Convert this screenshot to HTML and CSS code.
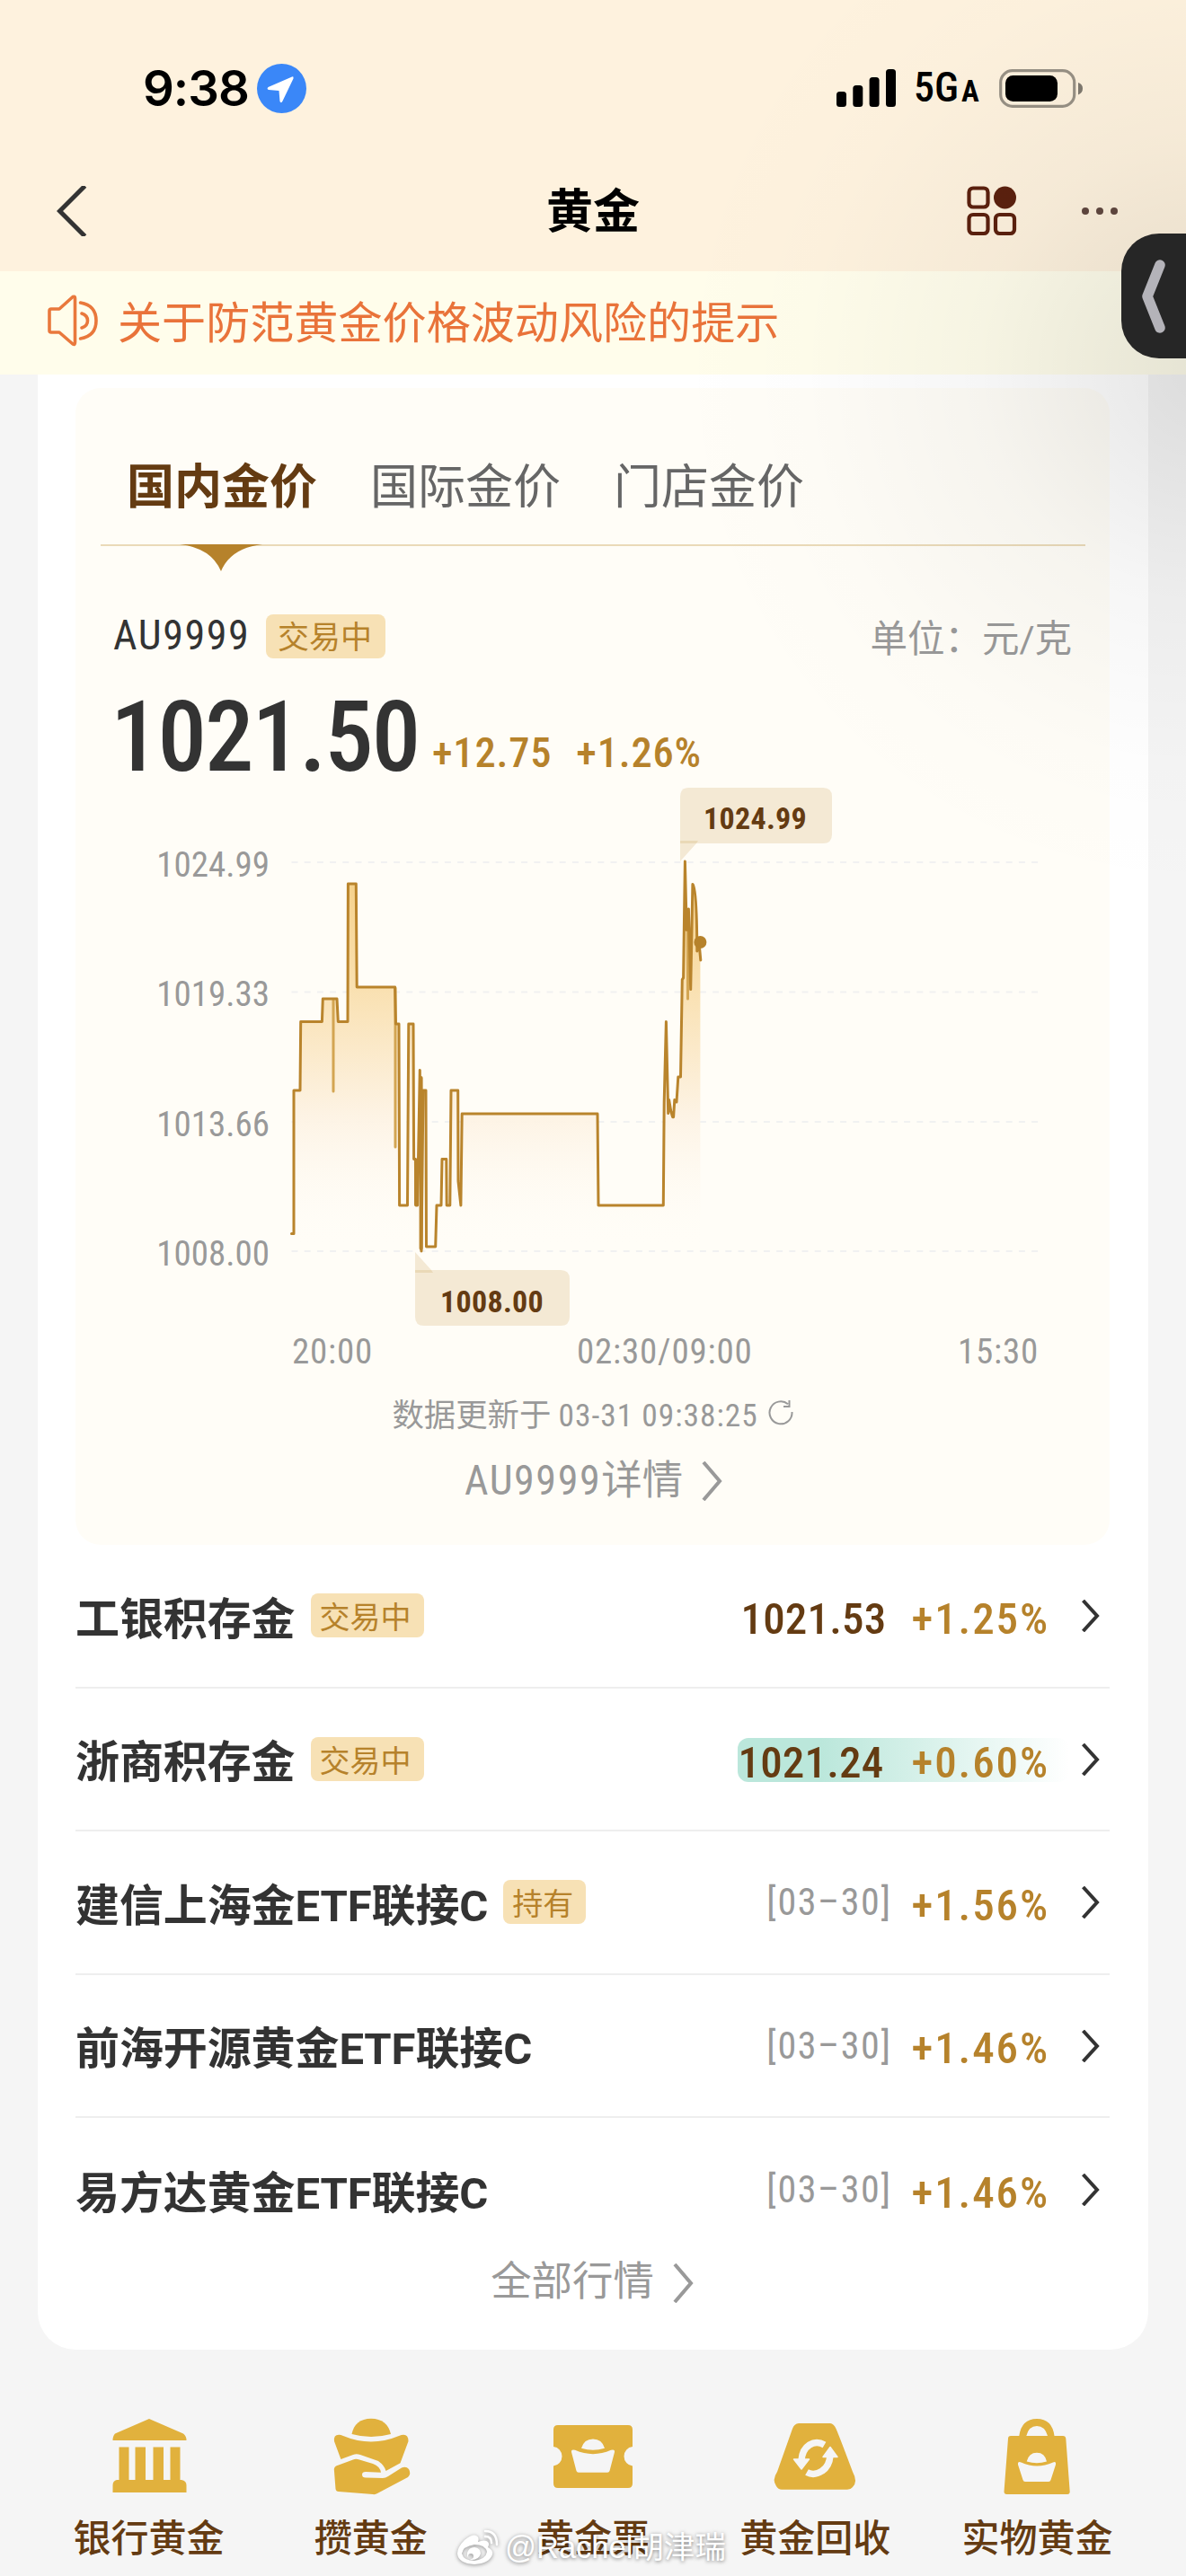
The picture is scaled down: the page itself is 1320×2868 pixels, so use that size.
FILE: index.html
```html
<!DOCTYPE html>
<html lang="zh-CN">
<head>
  <meta charset="UTF-8" />
  <meta name="viewport" content="width=device-width, initial-scale=1.0"/>
  <title>黄金</title>
  <link rel="stylesheet" href="styles.css">
</head>
<body>
  <div class="page">
    <header class="header">
      <div class="status-bar">
        <div class="status-left">
          <span class="time">9:38</span>
          <svg class="location" viewBox="0 0 55 55">
            <circle cx="27.5" cy="27.5" r="27.5" fill="#3a87f8"/>
            <path d="M39 14.5 L12.5 26 Q10.5 28 13 29 L24.5 30 L25.5 42 Q27 44.500 28.500 41.500 L40.500 16.500 Q41 13.500 39 14.500Z" fill="#fff"/>
          </svg>
        </div>
        <div class="status-right">
          <svg class="signal" viewBox="0 0 66 42">
            <rect x="0" y="25" width="11" height="17" rx="3.500"/>
            <rect x="18.300" y="18" width="11" height="24" rx="3.500"/>
            <rect x="36.600" y="9" width="11" height="33" rx="3.500"/>
            <rect x="55" y="0" width="11" height="42" rx="3.500"/>
          </svg>
          <span class="network">5G<small>A</small></span>
          <svg class="battery" viewBox="0 0 93 43">
            <rect x="1.700" y="1.700" width="82" height="39.600" rx="13" fill="none" stroke="#000" stroke-opacity=".4" stroke-width="3.200"/>
            <rect x="7" y="7" width="58" height="29" rx="8.500"/>
            <path d="M88 15 Q93 16.500 93 21.500 Q93 26.500 88 28.500Z" opacity=".5"/>
          </svg>
        </div>
      </div>

      <nav class="title-bar">
        <svg class="back" viewBox="0 0 34 56">
          <path d="M31.500 0 L3.500 28 L31.500 56" fill="none" stroke="#333" stroke-width="5"/>
        </svg>
        <h1>黄金</h1>
        <div class="title-actions">
          <svg class="grid" viewBox="0 0 56 56" fill="none" stroke="#5c210e" stroke-width="4.200">
            <rect x="2.500" y="2.500" width="21" height="21" rx="4.500"/>
            <circle cx="42.500" cy="13" r="12.500" fill="#5c210e" stroke="none"/>
            <rect x="2.500" y="32" width="21" height="21" rx="4.500"/>
            <rect x="32" y="32" width="21" height="21" rx="4.500"/>
          </svg>
          <svg class="more" viewBox="0 0 40 8" fill="#614840">
            <circle cx="4" cy="4" r="4"/><circle cx="20" cy="4" r="4"/><circle cx="36" cy="4" r="4"/>
          </svg>
        </div>
      </nav>
    </header>

    <div class="notice">
      <svg class="speaker" viewBox="0 0 56 58" fill="none" stroke="#e9783c" stroke-width="3.600" stroke-linecap="round" stroke-linejoin="round">
        <path d="M2 18 Q2 16 4 16 L13 16 L28 2.500 Q30.500 1.500 30.500 4 V53 Q30.500 56.500 28 55 L13 42 L4 42 Q2 42 2 40Z"/>
        <path d="M36.500 9 Q54 12 54 29 Q54 46 36.500 49"/>
        <path d="M38 21 Q44.500 23 44.500 29 Q44.500 35 38 37"/>
      </svg>
      <span>关于防范黄金价格波动风险的提示</span>
    </div>

    <main class="card">
      <section class="quote-panel">
        <div class="tabs">
          <span class="tab active">国内金价</span>
          <span class="tab">国际金价</span>
          <span class="tab">门店金价</span>
          <svg class="tab-arrow" viewBox="0 0 92 30"><path d="M0 0 H92 Q57 4 46 30 Q35 4 0 0Z" fill="#b6822b"/></svg>
        </div>

        <div class="quote-head">
          <span class="code">AU9999</span>
          <span class="tag tag-lg">交易中</span>
          <span class="unit">单位：元/克</span>
        </div>
        <div class="price-row">
          <span class="price">1021.50</span>
          <span class="delta">+12.75</span>
          <span class="delta">+1.26%</span>
        </div>

        <svg class="chart" viewBox="84 867 1151 663">
          <defs>
            <linearGradient id="area" gradientUnits="userSpaceOnUse" x1="0" y1="959" x2="0" y2="1393">
              <stop offset="0" stop-color="#f5cf85"/>
              <stop offset=".3" stop-color="#f9dfad"/>
              <stop offset=".65" stop-color="#fdf3e4"/>
              <stop offset="1" stop-color="#fffdf8" stop-opacity="0"/>
            </linearGradient>
          </defs>
          <g stroke="#f1f1f1" stroke-width="2" stroke-dasharray="7 7.200">
            <path d="M324.500 960H1156M324.500 1104.500H1156M324.500 1249H1156M324.500 1393H1156"/>
          </g>
          <g class="axis" text-anchor="end">
            <text x="300" y="976">1024.99</text>
            <text x="300" y="1120">1019.33</text>
            <text x="300" y="1265">1013.66</text>
            <text x="300" y="1409">1008.00</text>
          </g>
          <path fill="url(#area)" d="M327 1393V1214H334L334.700 1137.500H358.400L359.300 1112H375L376.300 1137.500H387L387.400 984H396.300L397.200 1099H439.600L441 1140H444L444.600 1342H453.500L454.800 1140H460L462 1290L467 1342L467.300 1191L471 1214H474L474.500 1388H484.700L486 1342H491L492 1290.600H496.800L497.200 1342H500.800L502 1214H509.700L512.900 1342L514.200 1240H665L666 1342H738.300L739.200 1227L741.400 1137.500L743.700 1239L748.600 1243L753 1227L754.800 1199H757.500L760.600 1088L762.400 959L764.200 1035L766.400 1012L768.700 1100L770.900 984.500Q775.400 990 775.800 1055L779.400 1049V1393Z"/>
          <g fill="none" stroke="#b9842c" stroke-width="3" stroke-linejoin="round" stroke-linecap="round">
            <path stroke="#d3a552" d="M371 1113V1215M440 1100V1277M765.500 1036V1112"/>
            <path d="M324.500 1373.500H327V1214H334L334.700 1137.500H358.400L359.300 1112H375L376.300 1137.500H387L387.400 984H396.300L397.200 1099H439.600L440.500 1140H444L444.600 1342H453.500L454.800 1140H460L460.600 1290.600H462.400L462.900 1342H464.600L467.300 1191.400L469 1393L471 1214H474L474.500 1388H484.700L486 1342H491L492 1290.600H496.800L497.200 1342H500.800L502 1214H509.700L510 1315L512.900 1342L514.200 1240H665L666 1342H738.300L739.200 1227L741.400 1137.500L743.700 1239.600L744.600 1224.500L746.800 1237.500L748.600 1243.700H749.600L750.800 1224.500L753 1227L754.800 1199H757.500L759.300 1090.600L760.600 1088.600L762.400 959L764.200 1035.500L766.400 1012L768.700 1101.600L770.900 984.500Q775.600 988 775.800 1059L778 1049L779.800 1069"/>
            <path stroke-width="4" d="M463 1292V1341M468.600 1200V1390"/>
          </g>
          <circle cx="779.400" cy="1049" r="7" fill="#b6822b"/>
          <g fill="#f4e9d4">
            <path d="M757 939V887Q757 877 767 877H916Q926 877 926 887V929Q926 939 916 939Z"/>
            <path d="M462 1414H624Q634 1414 634 1424V1466Q634 1476 624 1476H472Q462 1476 462 1466Z"/>
            <path d="M757 939H775L757 959ZM462 1414H480L462 1394Z"/>
          </g>
          <path d="M757 936H777L775 939H757ZM462 1417H482L480 1414H462Z" fill="#ead9b7"/>
          <g class="bubble">
            <text x="783" y="923">1024.99</text>
            <text x="490" y="1460.500">1008.00</text>
          </g>
          <g class="axis times">
            <text x="325" y="1518">20:00</text>
            <text x="642" y="1518">02:30/09:00</text>
            <text x="1156" y="1518" text-anchor="end">15:30</text>
          </g>
        </svg>

        <div class="update">
          <span>数据更新于 <span class="stamp">03-31 09:38:25</span></span>
          <svg class="refresh" viewBox="0 0 28 28" fill="none" stroke="#999" stroke-width="2">
            <path d="M26.500 13A12.500 12.500 0 1 1 22 4.200M23.500 0V7H17"/>
          </svg>
        </div>
        <div class="link detail">
          <span><span class="detail-code">AU9999</span>详情</span>
          <svg class="chevron" viewBox="0 0 24 44"><path d="M2 1L20 22L2 43"/></svg>
        </div>
      </section>

      <ul class="list">
        <li>
          <b>工银积存金</b><span class="tag">交易中</span>
          <div class="values"><span class="num">1021.53</span><span class="rate">+1.25%</span></div>
          <svg class="arrow" viewBox="0 0 20 36"><path d="M1.500 1L17 18L1.500 35"/></svg>
        </li>
        <li>
          <b>浙商积存金</b><span class="tag">交易中</span>
          <div class="values flash"><span class="num">1021.24</span><span class="rate">+0.60%</span></div>
          <svg class="arrow" viewBox="0 0 20 36"><path d="M1.500 1L17 18L1.500 35"/></svg>
        </li>
        <li>
          <b>建信上海金ETF联接C</b><span class="tag">持有</span>
          <div class="values"><span class="date">[03–30]</span><span class="rate">+1.56%</span></div>
          <svg class="arrow" viewBox="0 0 20 36"><path d="M1.500 1L17 18L1.500 35"/></svg>
        </li>
        <li>
          <b>前海开源黄金ETF联接C</b>
          <div class="values"><span class="date">[03–30]</span><span class="rate">+1.46%</span></div>
          <svg class="arrow" viewBox="0 0 20 36"><path d="M1.500 1L17 18L1.500 35"/></svg>
        </li>
        <li>
          <b>易方达黄金ETF联接C</b>
          <div class="values"><span class="date">[03–30]</span><span class="rate">+1.46%</span></div>
          <svg class="arrow" viewBox="0 0 20 36"><path d="M1.500 1L17 18L1.500 35"/></svg>
        </li>
      </ul>
      <div class="link more-quotes">
        <span>全部行情</span>
        <svg class="chevron" viewBox="0 0 24 44"><path d="M2 1L20 22L2 43"/></svg>
      </div>
    </main>

    <nav class="services">
      <a class="service">
        <svg viewBox="0 0 96 96">
          <path d="M48 6L86 22.500Q89.500 25 89.500 30H7.500Q7.500 25 10 22.500ZM14.500 37.500H25.500V74H32.500V37.500H44V74H52.500V37.500H64V74H71.500V37.500H82.500V74H84Q89.500 75 89.500 80V88H7.500V80Q7.500 75 12 74H14.500Z"/>
        </svg>
        <span>银行黄金</span>
      </a>
      <a class="service">
        <svg viewBox="0 0 96 96">
          <path d="M26.500 23Q30 6 48 5.700Q66 6 70 23Q48 29 26.500 23Z"/>
          <path d="M7 31Q6 23.500 12.500 23.700Q14 23.700 17 25Q48 38 79 25Q89.500 21 89.500 31L80.500 55.300L64.500 64Q63 58 56 53L36 46Q31.600 44.500 28 46L14.400 51Z"/>
          <path d="M9 58.500L28 51.500Q31 50 35 51.500L50 56Q58 59 59 65.700L42 65Q38 65 38 68Q38 71.500 42 71.500L61 72Q64 72 67 70L82 60.500Q87 58.500 90 62Q93 67 89 71L55 89Q53 90.500 50 90L11.800 87Q9 87 8.500 84L6.800 62Q7 59.500 9 58.500Z"/>
        </svg>
        <span>攒黄金</span>
      </a>
      <a class="service">
        <svg viewBox="0 0 96 96">
          <path fill-rule="evenodd" d="M9 13H87Q92 13 92 18V37A10.500 10.800 0 0 0 92 58.500V78Q92 83 87 83H9Q4 83 4 78V58.500A10.500 10.800 0 0 0 4 37V18Q4 13 9 13ZM35 38.700Q38 28.500 48 28.500Q58 28.500 61 38.700Q48 43 35 38.700ZM24 43Q23.500 39.500 28 40.800Q48 49.500 68 40.800Q72.500 39.500 72 43L66.500 64Q66 65.700 64 65.700H32Q30 65.700 29.500 64Z"/>
        </svg>
        <span>黄金票</span>
      </a>
      <a class="service">
        <svg viewBox="0 0 96 96">
          <path d="M30 11H65Q69 11.500 71.500 17Q75 25 90 65Q96 76 90 82Q88 84.700 84 84.700H11Q7 84.700 5 81Q0 74 6 65L23 17Q25 11.500 30 11Z"/>
          <g fill="none" stroke="#f5f5f5" stroke-width="7.500">
            <path d="M58.500 35Q50 30 42 35Q34 40 33 52"/>
            <path d="M39 65.500Q47 70 56 64Q64 59 65 47"/>
          </g>
          <path d="M24.500 51H41.500L33 62ZM57 48.500H73L65 37.500Z" fill="#f5f5f5" stroke="#f5f5f5" stroke-width="1.500" stroke-linejoin="round"/>
        </svg>
        <span>黄金回收</span>
      </a>
      <a class="service">
        <svg viewBox="0 0 96 96">
          <path fill-rule="evenodd" d="M28.300 25Q31 6 48 6Q65 6 67.500 25H77Q80 25 80.300 28L84.700 87Q84.700 90 82 90H14.500Q11.500 90 11.500 87L16 28Q16 25 19 25ZM36.300 25H60Q57 14 48 14Q39 14 36.300 25ZM36.700 53.500Q39 43.700 48 43.700Q57 43.700 59 53.500Q48 57 36.700 53.500ZM27 57Q26.500 53 30.500 54.500Q48 62.500 66 54.500Q69.500 53 69 57L63.500 74Q63 76 61 76H35Q33 76 32.500 74Z"/>
        </svg>
        <span>实物黄金</span>
      </a>
    </nav>

    <div class="shade"></div>
    <div class="side-handle">
      <svg viewBox="0 0 26 82"><path d="M20 6L6 41L20 76" fill="none" stroke="#b4b3b9" stroke-width="11.500" stroke-linecap="round" stroke-linejoin="round"/></svg>
    </div>

    <div class="watermark">
      <svg viewBox="0 0 48 40">
        <path fill="#fff" fill-rule="evenodd" d="M23 7Q27 9 25 14Q33 11 36 14Q38 16 36 20Q42 23 41 28Q38 38 21 39Q3 38 2 27Q2 20 10 12Q19 5 23 7ZM21 17Q8 19 7 27Q9 35 21 35Q34 33 35 25Q33 17 21 17ZM21 20Q28 21 28 27Q26 34 18 34Q12 32 13 26Q15 20 21 20ZM17 27A3 3 0 1 0 20 30A3 3 0 0 0 17 27Z"/>
        <path fill="none" stroke="#fff" stroke-width="2.500" stroke-linecap="round" d="M33 2Q46 2 46 17M33 8Q40 8 40 15"/>
      </svg>
      <span>@Rachel胡津瑞</span>
    </div>
  </div>
</body>
</html>
```
FILE: styles.css
```css
* {
  box-sizing: border-box;
}

body {
  margin: 0;
  background-color: #f5f5f5;
  font-family: Roboto, "Noto Sans CJK SC", sans-serif;
  color: #333;
}

svg {
  display: block;
  flex-shrink: 0;
}

.page {
  position: relative;
  width: 1320px;
  height: 2868px;
  overflow: hidden;
}

/* header */
.header {
  height: 302px;
  background-color: #fef2de;
}

.status-bar {
  height: 196px;
  padding: 0 115px 0 159px;
  display: flex;
  justify-content: space-between;
  align-items: center;
  color: #000;
}

.status-left, .status-right {
  display: flex;
  align-items: center;
}

.time {
  width: 127px;
  font-family: Inter, sans-serif;
  font-size: 54.5px;
  font-weight: 600;
  letter-spacing: -1px;
}

.location {
  width: 55px;
  height: 55px;
}

.signal {
  width: 66px;
  height: 42px;
  margin-right: 20px;
}

.network {
  width: 95px;
  padding-top: 3px;
  font-family: "Roboto Condensed", Roboto, sans-serif;
  font-size: 46px;
  font-weight: 500;
  line-height: 46px;
}

.network small {
  margin-left: 3px;
  font-size: 33px;
  font-weight: 700;
}

.battery {
  width: 93px;
  height: 43px;
}

.title-bar {
  height: 106px;
  padding: 0 63px 28px;
  display: grid;
  grid-template-columns: 1fr auto 1fr;
  align-items: center;
}

.back {
  width: 34px;
  height: 56px;
}

h1 {
  margin: 0;
  padding-top: 3px;
  font-size: 52px;
  font-weight: 700;
  line-height: 60px;
  color: #000;
}

.title-actions {
  display: flex;
  justify-content: flex-end;
  align-items: center;
  gap: 72px;
  margin-right: 13px;
}

.grid {
  width: 56px;
  height: 56px;
}

.more {
  width: 40px;
  height: 8px;
}

.notice {
  height: 115px;
  padding: 0 53px 6px;
  display: flex;
  align-items: center;
  gap: 22px;
  background-color: #fffdeb;
  color: #e9733a;
  font-size: 49.1px;
}

.notice span {
  padding-bottom: 2px;
}

.speaker {
  width: 56px;
  height: 58px;
}

/* main card */
.card {
  height: 2199px;
  margin: 0 42px;
  padding: 15px 43px 0 42px;
  background-color: #fff;
  border-radius: 0 0 42px 42px;
}

.quote-panel {
  height: 1288px;
  border-radius: 28px;
  background-color: #fffdf7;
}

.tabs {
  position: relative;
  height: 176px;
  margin: 0 27px 0 28px;
  padding: 38px 29px 0;
  display: flex;
  align-items: center;
  gap: 59px;
  border-bottom: 2px solid #eadab8;
}

.tab {
  font-size: 53px;
  color: #666;
}

.tab.active {
  font-weight: 700;
  color: #643b12;
}

.tab-arrow {
  position: absolute;
  left: 88px;
  top: 174px;
  width: 92px;
  height: 30px;
}

.quote-head {
  height: 125px;
  padding: 75px 42px 0;
  display: flex;
  align-items: center;
}

.code {
  width: 153px;
  margin: -3px 17px 0 0;
  font-family: "Roboto Condensed", Roboto, sans-serif;
  font-size: 46px;
  letter-spacing: 1.6px;
}

.tag {
  height: 49px;
  margin-left: 17px;
  padding: 0 14px 0 10px;
  border-radius: 8px;
  background-color: #f7e1b5;
  color: #b6822b;
  font-size: 34px;
  line-height: 54px;
  white-space: nowrap;
}

.tag-lg {
  margin-left: 0;
  padding: 0 15px 0 13px;
  font-size: 35px;
}

.unit {
  margin-left: auto;
  font-size: 41.5px;
  color: #999;
}

.price-row {
  height: 134px;
  padding-left: 39px;
  display: flex;
  align-items: flex-end;
  font-family: "Roboto Condensed", Roboto, sans-serif;
}

.price {
  width: 358px;
  font-size: 109px;
  font-weight: 500;
  line-height: 92px;
  letter-spacing: -2px;
}

.delta {
  margin-right: 27px;
  font-size: 46.5px;
  font-weight: 500;
  line-height: 57px;
  letter-spacing: .8px;
  color: #b6822b;
}

.chart {
  width: 1151px;
  height: 663px;
  font-family: "Roboto Condensed", Roboto, sans-serif;
}

.axis {
  font-size: 39px;
  fill: #999;
}

.times {
  letter-spacing: .8px;
}

.bubble {
  font-size: 34px;
  font-weight: 700;
  letter-spacing: .3px;
  fill: #643b12;
}

.update {
  height: 88px;
  padding-bottom: 3px;
  display: flex;
  justify-content: center;
  align-items: center;
  gap: 11px;
  font-family: "Roboto Condensed", "Noto Sans CJK SC", sans-serif;
  font-size: 35.4px;
  color: #999;
}

.stamp {
  letter-spacing: 1px;
}

.refresh {
  width: 28px;
  height: 28px;
}

.link {
  display: flex;
  justify-content: center;
  align-items: center;
  gap: 21px;
  font-family: "Roboto Condensed", "Noto Sans CJK SC", sans-serif;
  font-size: 45.4px;
  line-height: 60px;
  color: #999;
}

.link > span {
  margin-top: -1px;
}

.detail {
  height: 62px;
  padding-left: 3px;
}

.detail-code {
  font-size: 46px;
  letter-spacing: 1.6px;
}

.more-quotes {
  height: 48px;
}

.chevron {
  width: 24px;
  height: 44px;
}

.chevron path {
  fill: none;
  stroke: #999;
  stroke-width: 4;
}

/* product list */
.list {
  margin: 0;
  padding: 0;
  list-style: none;
}

.list li {
  height: 159.5px;
  padding-top: 4px;
  display: flex;
  align-items: center;
  border-bottom: 2px solid #eee;
}

.list li:last-child {
  border-bottom: none;
}

.list b {
  margin-top: -5px;
  font-size: 49px;
  font-weight: 700;
  letter-spacing: -.1px;
  white-space: nowrap;
}

.list .tag {
  margin-top: -4px;
}

.values {
  height: 49px;
  margin-left: auto;
  margin-right: 14px;
  padding: 3px 22px 0 0;
  display: flex;
  align-items: center;
  font-family: "Roboto Condensed", Roboto, sans-serif;
  font-size: 49px;
  line-height: 49px;
}

.flash {
  margin-top: -2px;
  padding-top: 6px;
  border-radius: 12px;
  background: linear-gradient(to right, #bbe7db 25%, rgba(187, 231, 219, 0));
}

.num {
  font-weight: 500;
  letter-spacing: .2px;
  color: #643b12;
}

.rate {
  margin-left: 28px;
  font-weight: 500;
  letter-spacing: 1.9px;
  color: #b6822b;
}

.flash .rate {
  margin-left: 31px;
}

.date {
  margin-top: -7px;
  font-size: 42px;
  letter-spacing: 1.6px;
  color: #999;
}

.date + .rate {
  margin-left: 22px;
}

.arrow {
  width: 20px;
  height: 36px;
  margin: -3px 11px 0 0;
}

.arrow path {
  fill: none;
  stroke: #333;
  stroke-width: 4;
}

/* bottom shortcuts */
.services {
  margin: 71px 42px 0;
  display: flex;
}

.service {
  flex: 1;
  display: flex;
  flex-direction: column;
  align-items: center;
  gap: 16px;
  font-size: 42px;
  font-weight: 500;
  line-height: 56px;
  color: #643b12;
}

.service svg {
  width: 96px;
  height: 96px;
  fill: #e1b13d;
}

/* overlays */
.shade {
  position: absolute;
  inset: 0;
  background: radial-gradient(circle 600px at 1340px 410px, rgba(0, 0, 0, .1), rgba(0, 0, 0, .035) 42%, rgba(0, 0, 0, .008) 75%, transparent);
}

.side-handle {
  position: absolute;
  top: 260px;
  right: 0;
  width: 72px;
  height: 139px;
  padding-left: 23px;
  display: flex;
  align-items: center;
  border-radius: 42px 0 0 42px;
  background-color: #262626;
}

.side-handle svg {
  width: 26px;
  height: 82px;
}

.watermark {
  position: absolute;
  left: 507px;
  top: 2813px;
  display: flex;
  align-items: center;
  gap: 7px;
  font-family: "Liberation Sans", "Noto Sans CJK SC", sans-serif;
  font-size: 34.5px;
  line-height: 46px;
  color: #fff;
  text-shadow: 0 1px 4px rgba(0, 0, 0, .5);
}

.watermark svg {
  width: 48px;
  height: 40px;
  filter: drop-shadow(0 1px 2px rgba(0, 0, 0, .4));
}
```
